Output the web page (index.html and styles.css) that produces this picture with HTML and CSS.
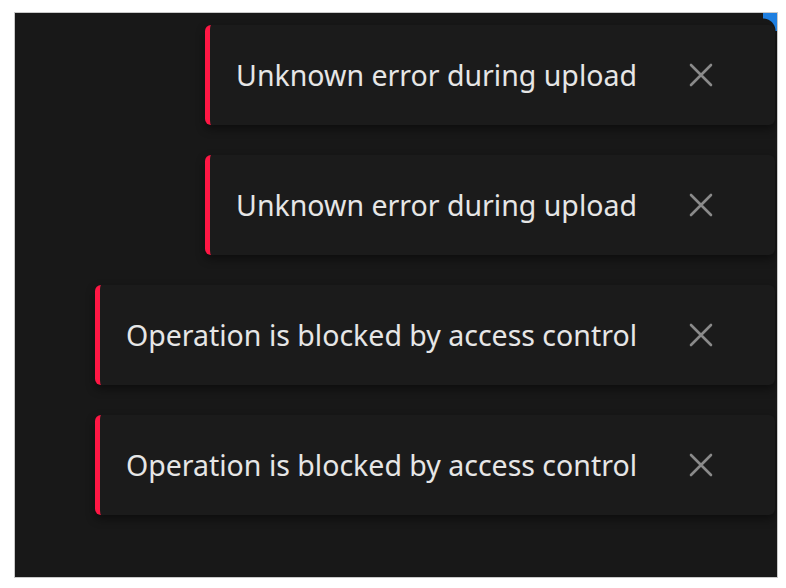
FILE: index.html
```html
<!DOCTYPE html>
<html>
<head>
<meta charset="utf-8">
<link rel="stylesheet" href="styles.css">
</head>
<body>
<div class="panel">
  <div class="corner"></div>
  <div class="stack">
    <div class="toast">
      <span class="msg">Unknown error during upload</span>
      <button class="close" aria-label="Close"><svg viewBox="0 0 24 24" width="24" height="24"><path d="M2 2 L22 22 M22 2 L2 22" stroke="#8a8a8a" stroke-width="2.6" stroke-linecap="round" fill="none"/></svg></button>
    </div>
    <div class="toast">
      <span class="msg">Unknown error during upload</span>
      <button class="close" aria-label="Close"><svg viewBox="0 0 24 24" width="24" height="24"><path d="M2 2 L22 22 M22 2 L2 22" stroke="#8a8a8a" stroke-width="2.6" stroke-linecap="round" fill="none"/></svg></button>
    </div>
    <div class="toast">
      <span class="msg">Operation is blocked by access control</span>
      <button class="close" aria-label="Close"><svg viewBox="0 0 24 24" width="24" height="24"><path d="M2 2 L22 22 M22 2 L2 22" stroke="#8a8a8a" stroke-width="2.6" stroke-linecap="round" fill="none"/></svg></button>
    </div>
    <div class="toast">
      <span class="msg">Operation is blocked by access control</span>
      <button class="close" aria-label="Close"><svg viewBox="0 0 24 24" width="24" height="24"><path d="M2 2 L22 22 M22 2 L2 22" stroke="#8a8a8a" stroke-width="2.6" stroke-linecap="round" fill="none"/></svg></button>
    </div>
  </div>
</div>
</body>
</html>
```

FILE: styles.css
```css
html, body {
  margin: 0;
  padding: 0;
  background: #ffffff;
}
body {
  font-family: "Noto Sans", "Open Sans", sans-serif;
}
.panel {
  position: relative;
  box-sizing: border-box;
  margin: 12px 0 0 14px;
  width: 764px;
  height: 566px;
  border: 1px solid #c9c9c9;
  background: #181818;
  overflow: hidden;
}
.corner {
  position: absolute;
  top: 0;
  right: 0;
  width: 14px;
  height: 18px;
  background: radial-gradient(circle at 0 100%, transparent 12px, #1f7fe0 13px);
}
.stack {
  display: flex;
  flex-direction: column;
  align-items: flex-end;
  gap: 30px;
  padding: 12px 2px 0 0;
}
.toast {
  box-sizing: border-box;
  height: 100px;
  display: flex;
  align-items: center;
  background: #1b1b1b;
  border-left: 5px solid #ff1744;
  border-radius: 6px;
  padding: 0 62px 0 26px;
  box-shadow: 0 4px 10px rgba(0, 0, 0, 0.45);
}
.msg {
  color: #e6e6e6;
  font-size: 28.5px;
  white-space: nowrap;
}
.close {
  margin-left: 52px;
  width: 24px;
  height: 24px;
  padding: 0;
  border: 0;
  background: none;
  display: flex;
}
```
